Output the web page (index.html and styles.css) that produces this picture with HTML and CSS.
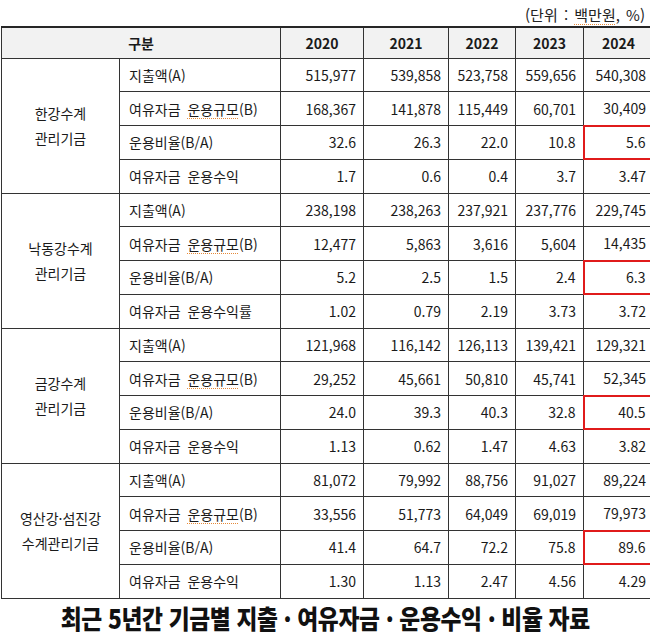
FILE: index.html
```html
<!DOCTYPE html>
<html lang="ko">
<head>
<meta charset="utf-8">
<link rel="stylesheet" href="styles.css">
</head>
<body>
<div class="page">
  <div class="unit">(단위 : <span class="spell">백만원</span>, %)</div>
  <table class="fund">
    <colgroup>
      <col class="c-group"><col class="c-item"><col class="c-y20"><col class="c-y21"><col class="c-y22"><col class="c-y23"><col class="c-y24">
    </colgroup>
    <thead>
      <tr><th colspan="2">구분</th><th>2020</th><th>2021</th><th>2022</th><th>2023</th><th>2024</th></tr>
    </thead>
    <tbody>
      <tr><td class="grp" rowspan="4">한강수계<br>관리기금</td><td class="item">지출액(A)</td><td>515,977</td><td>539,858</td><td>523,758</td><td>559,656</td><td>540,308</td></tr>
      <tr><td class="item">여유자금 <span class="spell">운용규모</span>(B)</td><td>168,367</td><td>141,878</td><td>115,449</td><td>60,701</td><td>30,409</td></tr>
      <tr><td class="item">운용비율(B/A)</td><td>32.6</td><td>26.3</td><td>22.0</td><td>10.8</td><td class="hl">5.6</td></tr>
      <tr class="gend"><td class="item">여유자금 운용수익</td><td>1.7</td><td>0.6</td><td>0.4</td><td>3.7</td><td>3.47</td></tr>

      <tr><td class="grp" rowspan="4">낙동강수계<br>관리기금</td><td class="item">지출액(A)</td><td>238,198</td><td>238,263</td><td>237,921</td><td>237,776</td><td>229,745</td></tr>
      <tr><td class="item">여유자금 <span class="spell">운용규모</span>(B)</td><td>12,477</td><td>5,863</td><td>3,616</td><td>5,604</td><td>14,435</td></tr>
      <tr><td class="item">운용비율(B/A)</td><td>5.2</td><td>2.5</td><td>1.5</td><td>2.4</td><td class="hl">6.3</td></tr>
      <tr><td class="item">여유자금 운용수익률</td><td>1.02</td><td>0.79</td><td>2.19</td><td>3.73</td><td>3.72</td></tr>

      <tr><td class="grp" rowspan="4">금강수계<br>관리기금</td><td class="item">지출액(A)</td><td>121,968</td><td>116,142</td><td>126,113</td><td>139,421</td><td>129,321</td></tr>
      <tr><td class="item">여유자금 <span class="spell">운용규모</span>(B)</td><td>29,252</td><td>45,661</td><td>50,810</td><td>45,741</td><td>52,345</td></tr>
      <tr><td class="item">운용비율(B/A)</td><td>24.0</td><td>39.3</td><td>40.3</td><td>32.8</td><td class="hl">40.5</td></tr>
      <tr><td class="item">여유자금 운용수익</td><td>1.13</td><td>0.62</td><td>1.47</td><td>4.63</td><td>3.82</td></tr>

      <tr><td class="grp" rowspan="4">영산강·섬진강<br>수계관리기금</td><td class="item">지출액(A)</td><td>81,072</td><td>79,992</td><td>88,756</td><td>91,027</td><td>89,224</td></tr>
      <tr><td class="item">여유자금 <span class="spell">운용규모</span>(B)</td><td>33,556</td><td>51,773</td><td>64,049</td><td>69,019</td><td>79,973</td></tr>
      <tr><td class="item">운용비율(B/A)</td><td>41.4</td><td>64.7</td><td>72.2</td><td>75.8</td><td class="hl">89.6</td></tr>
      <tr><td class="item">여유자금 운용수익</td><td>1.30</td><td>1.13</td><td>2.47</td><td>4.56</td><td>4.29</td></tr>
    </tbody>
  </table>
  <div class="caption"><span class="caption-text">최근 5년간 기금별 지출 · 여유자금 · 운용수익 · 비율 자료</span></div>
</div>
</body>
</html>
```

FILE: styles.css
```css
html, body {
  margin: 0;
  padding: 0;
  background: #ffffff;
}
body {
  width: 650px;
  height: 643px;
  overflow: hidden;
  font-family: "Noto Sans CJK KR", "Noto Sans", sans-serif;
  color: #1a1a1a;
}
.page {
  width: 650px;
}
.unit {
  height: 26px;
  line-height: 30px;
  font-size: 15px;
  text-align: right;
  padding-right: 5px;
  box-sizing: border-box;
  color: #222;
  word-spacing: 2px;
}
.spell {
  text-decoration: underline dotted #e58a3a;
  text-underline-offset: 3px;
  text-decoration-thickness: 1px;
}
.fund {
  border-collapse: collapse;
  table-layout: fixed;
  width: 652px;
  margin-left: 1px;
  font-size: 14px;
}
.c-group { width: 118px; }
.c-item { width: 161px; }
.c-y20 { width: 83px; }
.c-y21 { width: 85px; }
.c-y22 { width: 67px; }
.c-y23 { width: 68px; }
.c-y24 { width: 70px; }
.fund th, .fund td {
  border: 1px solid #333333;
  padding: 0 7px 0 7px;
  white-space: nowrap;
  overflow: visible;
}
.fund thead tr {
  height: 31px;
}
.fund th {
  background: #f2f2f2;
  font-weight: 700;
  text-align: center;
  border-top: 2px solid #262626;
  font-size: 14px;
}
.fund tbody tr {
  height: 33.75px;
}
.fund td {
  text-align: right;
  line-height: 20px;
}
.fund td.item {
  text-align: left;
  padding-left: 9px;
  word-spacing: 3px;
}
.fund td.grp {
  text-align: center;
  line-height: 25px;
  padding: 0;
}
.fund td.hl {
  border: 2px solid #e01b1b;
}
.caption {
  height: 38px;
  display: flex;
  align-items: center;
  justify-content: center;
}
.caption-text {
  display: inline-block;
  font-size: 26px;
  font-weight: 900;
  color: #111;
  letter-spacing: -0.4px;
  transform: scaleX(0.875);
  white-space: nowrap;
}
```
